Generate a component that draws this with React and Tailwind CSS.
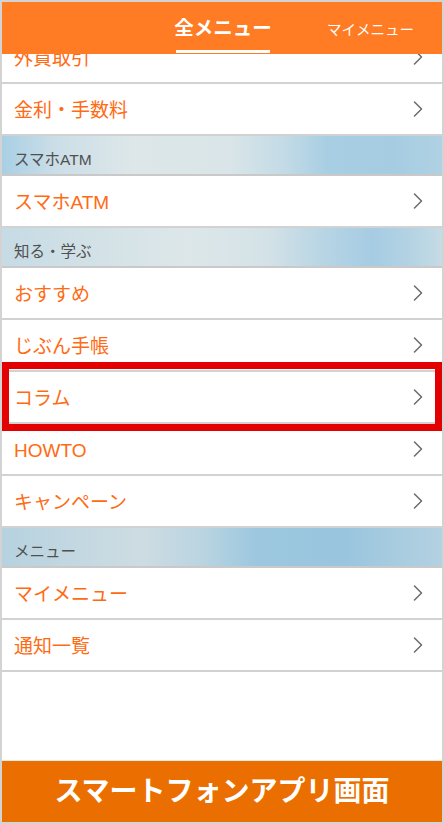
import React from 'react';

const items = [
    { type: 'row', label: '外貨取引', first: true },
    { type: 'row', label: '金利・手数料' },
    { type: 'section', label: 'スマホATM', bg: 'bg-[linear-gradient(90deg,#a9cfe4_0%,#cbdee7_12%,#dde7e9_30%,#d9e5e8_52%,#c3dbe6_64%,#a8cee3_74%,#a6cce2_88%,#afd1e3_100%)]' },
    { type: 'row', label: 'スマホATM' },
    { type: 'section', label: '知る・学ぶ', bg: 'bg-[linear-gradient(90deg,#c6dbe5_0%,#d2e1e6_20%,#dde7e9_42%,#d4e2e7_60%,#b6d4e4_74%,#a6cce3_84%,#b4d3e3_93%,#c6dbe5_100%)]' },
    { type: 'row', label: 'おすすめ' },
    { type: 'row', label: 'じぶん手帳' },
    { type: 'row', label: 'コラム', marked: true },
    { type: 'row', label: 'HOWTO' },
    { type: 'row', label: 'キャンペーン' },
    { type: 'section', label: 'メニュー', bg: 'bg-[linear-gradient(90deg,#b6d2e0_0%,#c4d8e1_18%,#cddce2_32%,#b9d4e1_46%,#9cc7df_58%,#99c5de_78%,#a8cce0_90%,#b3d1e1_100%)]' },
    { type: 'row', label: 'マイメニュー' },
    { type: 'row', label: '通知一覧' },
];

// --- Chevron drawn to match the thin grey arrow ---
const Chevron = () => (
    <svg width="10" height="16" viewBox="0 0 10 16" fill="none">
        <path d="M1.5 1 L8.5 8 L1.5 15" stroke="#6b6b6b" strokeWidth="1.5" strokeLinecap="round" strokeLinejoin="round" />
    </svg>
);

function Row({ label, first, marked }) {
    return (
        <div className={`relative flex h-[52px] shrink-0 items-center justify-between border-b-2 border-[#d2d2d2] bg-white pl-[12px] pr-[19px] ${first ? '-mt-[22px]' : ''}`}>
            <span className="pt-[4px] text-[19px] leading-[26px] text-[#ff6a12]">{label}</span>
            <Chevron />
            {marked && (
                <div className="absolute -top-[10px] -bottom-[9px] left-0 right-0 z-10 border-[7px] border-[#e20000]" />
            )}
        </div>
    );
}

function Section({ label, bg }) {
    return (
        <div className={`h-[40px] shrink-0 border-b-2 border-[#c9c9c9] pl-[12px] pt-[13px] ${bg}`}>
            <span className="block text-[15.5px] leading-[22px] text-[#505050]">{label}</span>
        </div>
    );
}

function App() {
    return (
        <div className="flex h-[824px] w-[444px] flex-col overflow-hidden border-2 border-[#d3d3d3] bg-white font-['Liberation_Sans','Noto_Sans_CJK_JP',sans-serif]">
            {/* --- Header tabs --- */}
            <div className="z-20 flex h-[52px] shrink-0 bg-[#ff7b24] pl-[172px]">
                <div className="flex w-[98px] flex-col items-center pt-[12px]">
                    <span className="whitespace-nowrap text-[19.5px] font-bold leading-[28px] text-white">全メニュー</span>
                    <span className="mt-[8px] h-[3px] w-[94px] bg-white" />
                </div>
                <div className="ml-[55px] flex items-center pt-[3px]">
                    <span className="whitespace-nowrap text-[14.5px] leading-[20px] text-white">マイメニュー</span>
                </div>
            </div>

            {/* --- Menu list --- */}
            <div className="flex flex-1 flex-col overflow-hidden">
                {items.map((item, i) =>
                    item.type === 'row' ? (
                        <Row key={i} label={item.label} first={item.first} marked={item.marked} />
                    ) : (
                        <Section key={i} label={item.label} bg={item.bg} />
                    )
                )}
            </div>

            {/* --- Caption bar --- */}
            <div className="flex h-[62px] shrink-0 items-center justify-center border-t border-[#e8e8e8] bg-[#eb6f00]">
                <span className="text-[28px] font-bold leading-[36px] text-white">スマートフォンアプリ画面</span>
            </div>
        </div>
    );
}

export default App;
